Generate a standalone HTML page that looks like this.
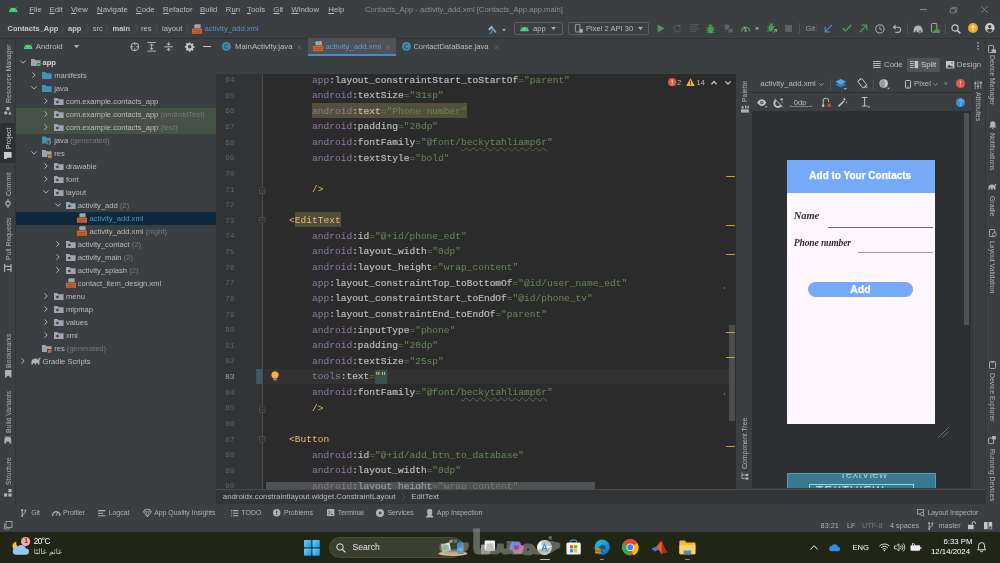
<!DOCTYPE html>
<html lang="en">
<head>
<meta charset="utf-8">
<title>Contacts_App - activity_add.xml</title>
<style>
*{box-sizing:border-box;margin:0;padding:0}
html,body{width:1000px;height:563px;overflow:hidden;background:#3c3f41}
body{position:relative;font-family:"Liberation Sans","DejaVu Sans",sans-serif;font-size:7.4px;color:#bbbbbb;line-height:1}
#root{position:absolute;left:0;top:0;width:1000px;height:563px;overflow:hidden;background:#3c3f41;will-change:transform;filter:blur(0.4px)}
.abs{position:absolute}
.t{position:absolute;white-space:nowrap}
svg{position:absolute;overflow:visible}
/* ---------- menu bar ---------- */
#menubar{left:0;top:0;width:1000px;height:19px;background:#3c3f41}
#menubar .t{top:6.200px;font-size:7.8px;color:#bbbbbb}
#menubar u{text-decoration-thickness:0.5px;text-underline-offset:0.6px}
/* ---------- nav bar ---------- */
#navbar{left:0;top:19px;width:1000px;height:19px;background:#3c3f41}
#navbar .t{top:5.8px;font-size:7.6px}
#navbar b{font-weight:bold;color:#c8c8c8;font-size:7.5px}
#navbar .sep{color:#6e6e6e;font-size:9px;top:3.8px}
.combo{border:0.6px solid #5e6060;border-radius:1.5px;background:#3c3f41}
/* ---------- left stripe ---------- */
.vt{position:absolute;white-space:nowrap;font-size:6.9px;line-height:7.6px;color:#b0b0b0;transform-origin:0 0}
.vl{transform:rotate(-90deg)}
.vr{transform:rotate(90deg)}
/* ---------- project tree ---------- */
#tree{left:15px;top:55.5px;width:201px;height:433px;overflow:hidden}
#tree .r{position:relative;height:13.02px;width:201px}
#tree .r .t{top:3.300px;font-size:7.6px;color:#bbbbbb}
#tree .g{color:#77797a}
#tree .green{background:#475246}
#tree .sel{background:#0d293e}
#tree b{color:#d4d4d4}
.scr{font-family:"Liberation Serif",serif;font-style:italic;font-weight:bold;font-size:9.600px;color:#322e34;letter-spacing:-0.150px}
/* ---------- editor ---------- */
#editor{left:216px;top:73.5px;width:520px;height:415.9px;background:#2b2b2b;overflow:hidden}
#gutter{left:0;top:0;width:46.5px;height:417px;background:#313335}
.ln{position:absolute;left:0;width:18.6px;text-align:right;font-family:"Liberation Mono",monospace;font-size:8.1px;color:#606366}
.cl{position:absolute;left:50.2px;white-space:pre;font-family:"Liberation Mono",monospace;font-size:9.55px;color:#a9b7c6;height:15.625px;line-height:15.625px}
.ln.cur{color:#a4a3a3}
.hl{background:#52503a}
.tgh{background:#4a4a33}
.br{background:#3b514d}
.typo{text-decoration:underline wavy rgba(107,143,90,0.55);text-decoration-thickness:0.5px;text-underline-offset:1.5px}
.ns{color:#917b9f}.at{color:#bdbdbd;-webkit-text-stroke:0.180px #bdbdbd}.v{color:#6a8759}.tg{color:#e8bf6a}
</style>
</head>
<body>
<div id="root">
<div id="menubar" class="abs">
<svg style="left:8.6px;top:7.3px" width="8.6" height="5" viewBox="0 0 17 10"><path d="M0.2 10a8.3 8.3 0 0 1 16.6 0z" fill="#3ddc84"/><path d="M3.2 3.2L1.6 0.6M13.8 3.2l1.6-2.6" stroke="#3ddc84" stroke-width="1" fill="none"/><circle cx="4.8" cy="6.4" r="0.9" fill="#3c3f41"/><circle cx="12.2" cy="6.4" r="0.9" fill="#3c3f41"/></svg>
<span class="t" style="left:29.3px"><u>F</u>ile</span>
<span class="t" style="left:49.5px"><u>E</u>dit</span>
<span class="t" style="left:71px"><u>V</u>iew</span>
<span class="t" style="left:97px"><u>N</u>avigate</span>
<span class="t" style="left:136px"><u>C</u>ode</span>
<span class="t" style="left:163px"><u>R</u>efactor</span>
<span class="t" style="left:200px"><u>B</u>uild</span>
<span class="t" style="left:225.8px">R<u>u</u>n</span>
<span class="t" style="left:247px"><u>T</u>ools</span>
<span class="t" style="left:273.3px"><u>G</u>it</span>
<span class="t" style="left:291.3px"><u>W</u>indow</span>
<span class="t" style="left:328.3px"><u>H</u>elp</span>
<span class="t" id="wtitle" style="left:365px;color:#8c8c8c;font-size:7.68px">Contacts_App - activity_add.xml [Contacts_App.app.main]</span>
<svg style="left:920px;top:9px" width="7" height="1" viewBox="0 0 7 1"><rect width="7" height="0.7" fill="#a8a8a8"/></svg>
<svg style="left:950px;top:6.6px" width="7" height="6.4" viewBox="0 0 7 6.4"><rect x="0.3" y="1.5" width="4.9" height="4.6" rx="0.8" fill="none" stroke="#a8a8a8" stroke-width="0.6"/><path d="M1.7 1.3V1a0.7 0.7 0 0 1 .7-.7H6a.7.7 0 0 1 .7.7v3.6a.7.7 0 0 1-.7.7h-.6" fill="none" stroke="#a8a8a8" stroke-width="0.6"/></svg>
<svg style="left:980.6px;top:6px" width="7" height="7" viewBox="0 0 7 7"><path d="M0.3 0.3L6.7 6.7M6.7 0.3L0.3 6.7" stroke="#a8a8a8" stroke-width="0.6" fill="none"/></svg>
</div>
<div id="navbar" class="abs">
<span class="t" style="left:7.5px"><b>Contacts_App</b></span>
<svg style="left:60.5px;top:5px" width="3" height="9" viewBox="0 0 3 9"><path d="M0.4 0.4L2.6 4.5L0.4 8.6" fill="none" stroke="#585b5d" stroke-width="0.6"/></svg>
<span class="t" style="left:68px"><b>app</b></span>
<svg style="left:85.5px;top:5px" width="3" height="9" viewBox="0 0 3 9"><path d="M0.4 0.4L2.6 4.5L0.4 8.6" fill="none" stroke="#585b5d" stroke-width="0.6"/></svg>
<span class="t" style="left:92.7px">src</span>
<svg style="left:105.0px;top:5px" width="3" height="9" viewBox="0 0 3 9"><path d="M0.4 0.4L2.6 4.5L0.4 8.6" fill="none" stroke="#585b5d" stroke-width="0.6"/></svg>
<span class="t" style="left:112.5px"><b>main</b></span>
<svg style="left:134.5px;top:5px" width="3" height="9" viewBox="0 0 3 9"><path d="M0.4 0.4L2.6 4.5L0.4 8.6" fill="none" stroke="#585b5d" stroke-width="0.6"/></svg>
<span class="t" style="left:141px">res</span>
<svg style="left:155.0px;top:5px" width="3" height="9" viewBox="0 0 3 9"><path d="M0.4 0.4L2.6 4.5L0.4 8.6" fill="none" stroke="#585b5d" stroke-width="0.6"/></svg>
<span class="t" style="left:162px">layout</span>
<svg style="left:186.0px;top:5px" width="3" height="9" viewBox="0 0 3 9"><path d="M0.4 0.4L2.6 4.5L0.4 8.6" fill="none" stroke="#585b5d" stroke-width="0.6"/></svg>
<svg class="xmlico" style="left:192px;top:4.6px" width="10" height="10" viewBox="0 0 10 10"><rect x="0" y="4.6" width="10" height="5.2" fill="#d9602c"/><path d="M3.6 0.2h5v4H2.4V1.4z" fill="#9aa7b0"/><path d="M3.4 0.2v1.4H2z" fill="#c9d2d8"/><rect x="1.2" y="6.2" width="7.6" height="0.7" fill="#3c3f41" opacity=".55"/><rect x="1.2" y="7.8" width="7.6" height="0.7" fill="#3c3f41" opacity=".55"/></svg>
<span class="t" style="left:204.5px;color:#4f8fcf">activity_add.xml</span>
<!-- run toolbar -->
<svg style="left:487px;top:4.5px" width="20" height="11" viewBox="0 0 20 11"><path d="M1.2 5.2L4.6 1.6L6 3L2.6 6.6z" fill="#afb1b3"/><path d="M4.4 4.2l1-1L9.6 8l-1 1z" fill="#afb1b3"/><path d="M4.6 7.2L7 4.8" stroke="#3592c4" stroke-width="1.4"/><path d="M2.6 10L5.4 7.4" stroke="#3592c4" stroke-width="1.6"/><path d="M15 5l2 2.2L19 5z" fill="#afb1b3"/></svg>
<div class="abs combo" style="left:513.7px;top:3px;width:49px;height:12.6px"></div>
<svg style="left:520px;top:6.8px" width="9" height="5.2" viewBox="0 0 17 10"><path d="M0.2 10a8.3 8.3 0 0 1 16.6 0z" fill="#3ddc84"/><path d="M3.2 3.2L1.6 0.6M13.8 3.2l1.6-2.6" stroke="#3ddc84" stroke-width="1" fill="none"/><circle cx="4.8" cy="6.4" r="0.9" fill="#3c3f41"/><circle cx="12.2" cy="6.4" r="0.9" fill="#3c3f41"/></svg>
<span class="t" style="left:533px">app</span>
<svg style="left:551px;top:8px" width="5" height="3" viewBox="0 0 5 3"><path d="M0 0h5L2.5 3z" fill="#afb1b3"/></svg>
<div class="abs combo" style="left:567.5px;top:3px;width:81.4px;height:12.6px"></div>
<svg style="left:575px;top:5px" width="8" height="9" viewBox="0 0 8 9"><rect x="0.4" y="0.4" width="4.6" height="7.6" rx="0.7" fill="none" stroke="#afb1b3" stroke-width="0.8"/><rect x="4.6" y="5" width="3.2" height="3.6" fill="#afb1b3"/></svg>
<span class="t" style="left:586px">Pixel 2 API 30</span>
<svg style="left:637.5px;top:8px" width="5" height="3" viewBox="0 0 5 3"><path d="M0 0h5L2.5 3z" fill="#afb1b3"/></svg>
<svg style="left:657px;top:5px" width="8" height="9" viewBox="0 0 8 9"><path d="M0.6 0.4L7.6 4.5L0.6 8.6z" fill="#499c54"/></svg>
<svg style="left:672.5px;top:5px" width="9" height="9" viewBox="0 0 9 9"><path d="M7.4 4.6a3.2 3.2 0 1 1-1.4-2.7" fill="none" stroke="#5e6163" stroke-width="1"/><path d="M5 0.4L8 1.6L5.6 3.6z" fill="#5e6163"/></svg>
<svg style="left:689.5px;top:5.4px" width="10" height="8" viewBox="0 0 10 8"><path d="M0 0.6h9M0 2.8h7M0 5h9M0 7.2h6" stroke="#5e6163" stroke-width="0.9"/></svg>
<svg style="left:706px;top:4.6px" width="9" height="10" viewBox="0 0 9 10"><rect x="2" y="2.6" width="5" height="6.6" rx="1.6" fill="#499c54"/><path d="M2.6 2.4a1.9 1.9 0 0 1 3.8 0z" fill="#499c54"/><path d="M0.2 3.4l2 1M0 6h2M0.2 8.8l2-1M8.8 3.4l-2 1M9 6H7M8.8 8.8l-2-1M3 0.4l.8 1M6 0.4l-.8 1" stroke="#499c54" stroke-width="0.8"/></svg>
<svg style="left:723.5px;top:5px" width="9.4" height="9" viewBox="0 0 9.4 9"><path d="M0.6 1.2L3 0.2l2.4 1v3.4L3 6.2 0.6 4.6z" fill="#5e6163"/><path d="M4.2 4.4h5v4.4h-5z" fill="#5e6163" stroke="#3c3f41" stroke-width="0.6"/></svg>
<svg style="left:741px;top:5px" width="19" height="9" viewBox="0 0 19 9"><path d="M0.8 7.4a4 4 0 0 1 8 0" fill="none" stroke="#499c54" stroke-width="1.5"/><path d="M3.2 7.6a1.7 1.7 0 0 1 3.2 0z" fill="#afb1b3"/><path d="M4.8 6.6L3 2.6" stroke="#afb1b3" stroke-width="1"/><path d="M14 3.6l2.1 2.4L18.2 3.6z" fill="#afb1b3"/></svg>
<svg style="left:767px;top:4.4px" width="10.4" height="10.4" viewBox="0 0 10.4 10.4"><rect x="1.8" y="2.6" width="5" height="6" rx="1.5" fill="#499c54"/><path d="M2.4 2.4a1.9 1.9 0 0 1 3.8 0z" fill="#499c54"/><path d="M0.2 3.4l2 1M0 6h2M0.2 8.6l2-1M8.4 3.4l-2 1M2.8 0.4l.8 1M5.8 0.4l-.8 1" stroke="#499c54" stroke-width="0.8"/><path d="M5.6 6.2h4.4v3.9H5.6z" fill="#3c3f41"/><path d="M6.6 9.6L9.6 6.6M7.4 6.6h2.2v2.2" fill="none" stroke="#afb1b3" stroke-width="0.9"/></svg>
<div class="abs" style="left:785px;top:5.8px;width:7.2px;height:7.2px;background:#5e6163"></div>
<div class="abs" style="left:798.6px;top:4px;width:0.6px;height:11px;background:#515456"></div>
<span class="t" style="left:805.4px;color:#9a9a9a">Git:</span>
<svg style="left:824px;top:5px" width="9" height="9" viewBox="0 0 9 9"><path d="M8 1L1.6 7.4M1.2 2.8v5h5" fill="none" stroke="#3592c4" stroke-width="1.2"/></svg>
<svg style="left:841.6px;top:5.4px" width="10" height="8" viewBox="0 0 10 8"><path d="M0.8 4.2L3.6 7L9.2 0.8" fill="none" stroke="#499c54" stroke-width="1.3"/></svg>
<svg style="left:858.6px;top:5px" width="9" height="9" viewBox="0 0 9 9"><path d="M1 8L7.4 1.6M2.8 1.2h5v5" fill="none" stroke="#499c54" stroke-width="1.2"/></svg>
<svg style="left:874.8px;top:4.6px" width="9.8" height="9.8" viewBox="0 0 9.8 9.8"><circle cx="4.9" cy="4.9" r="4.1" fill="none" stroke="#afb1b3" stroke-width="1"/><path d="M4.9 2.4v2.8l2 1" fill="none" stroke="#afb1b3" stroke-width="0.9"/></svg>
<svg style="left:892px;top:5px" width="9.6" height="9" viewBox="0 0 9.6 9"><path d="M2.4 3.2h3.6a2.6 2.6 0 0 1 0 5.2H3.4" fill="none" stroke="#afb1b3" stroke-width="1.1"/><path d="M3.6 0.6L0.6 3.2l3 2.6z" fill="#afb1b3"/></svg>
<div class="abs" style="left:906.6px;top:4px;width:0.6px;height:11px;background:#515456"></div>
<svg style="left:913px;top:4.6px" width="10.4" height="10" viewBox="0 0 10.4 10"><path d="M0.6 6.6c0-3 2-5 4.6-5 2.4 0 3.8 1.4 4.2 3.4l.4 3.2H7.6V6.6H6V8.2H3.6V6.6H2.4v1.6H.6z" fill="#afb1b3"/><path d="M6.6 9.4V6.4M5.2 7.8l1.4 1.8L8 7.8" fill="none" stroke="#3592c4" stroke-width="1"/></svg>
<svg style="left:930.6px;top:4.4px" width="9" height="10.4" viewBox="0 0 9 10.4"><rect x="0.5" y="0.5" width="5.4" height="8.6" rx="0.8" fill="none" stroke="#afb1b3" stroke-width="0.9"/><rect x="3.4" y="6.6" width="5.4" height="3.4" rx="0.6" fill="#499c54"/></svg>
<div class="abs" style="left:944.6px;top:4px;width:0.6px;height:11px;background:#515456"></div>
<svg style="left:951px;top:4.6px" width="10" height="10" viewBox="0 0 10 10"><circle cx="4" cy="4" r="3.1" fill="none" stroke="#c7c9cb" stroke-width="1.2"/><path d="M6.2 6.2L9.4 9.4" stroke="#c7c9cb" stroke-width="1.5"/></svg>
<svg style="left:968.4px;top:4.2px" width="10" height="10" viewBox="0 0 10 10"><circle cx="5" cy="5" r="5" fill="#f0a732"/><path d="M5 7.8V3M3 4.8l2-2.2 2 2.2" fill="none" stroke="#fff" stroke-width="1"/></svg>
<svg style="left:985px;top:4.4px" width="9.6" height="9.6" viewBox="0 0 9.6 9.6"><circle cx="4.8" cy="4.8" r="4.8" fill="#c7c9cb"/><circle cx="4.8" cy="3.6" r="1.6" fill="#3c3f41"/><path d="M1.8 7.8a3.2 3.2 0 0 1 6 0a4.4 4.4 0 0 1-6 0z" fill="#3c3f41"/></svg>
</div>
<!-- ===== project header + tabs row (y 38-56) ===== -->
<div id="tabsrow" class="abs" style="left:0;top:37.6px;width:1000px;height:18.4px">
<div class="abs" style="left:0;top:0;width:1000px;height:0.6px;background:#323232"></div>
<svg style="left:23.6px;top:6.4px" width="8.4" height="5" viewBox="0 0 17 10"><path d="M0.2 10a8.3 8.3 0 0 1 16.6 0z" fill="#3ddc84"/><path d="M3.2 3.2L1.6 0.6M13.8 3.2l1.6-2.6" stroke="#3ddc84" stroke-width="1" fill="none"/><circle cx="4.8" cy="6.4" r="0.9" fill="#3c3f41"/><circle cx="12.2" cy="6.4" r="0.9" fill="#3c3f41"/></svg>
<span class="t" style="left:35.7px;top:5.2px;font-size:7.8px">Android</span>
<svg style="left:73.6px;top:7.6px" width="5.2" height="3.2" viewBox="0 0 5 3"><path d="M0 0h5L2.5 3z" fill="#afb1b3"/></svg>
<svg style="left:130px;top:4.2px" width="9.6" height="9.6" viewBox="0 0 9.6 9.6"><circle cx="4.8" cy="4.8" r="3.9" fill="none" stroke="#c3c5c7" stroke-width="0.9"/><path d="M4.8 0.6v2.6M4.8 6.4V9M0.6 4.8h2.6M6.4 4.8H9" stroke="#c3c5c7" stroke-width="0.9"/></svg>
<svg style="left:147px;top:4.2px" width="9.2" height="9.6" viewBox="0 0 9.2 9.6"><path d="M0.4 0.5h8.4M0.4 9.1h8.4" stroke="#c3c5c7" stroke-width="0.9"/><path d="M4.6 2v5.6M2.8 3.8l1.8-1.9 1.8 1.9M2.8 5.8l1.8 1.9 1.8-1.9" fill="none" stroke="#c3c5c7" stroke-width="0.9"/></svg>
<svg style="left:164.4px;top:4.2px" width="9.2" height="9.6" viewBox="0 0 9.2 9.6"><path d="M0.4 4.8h8.4" stroke="#c3c5c7" stroke-width="0.9"/><path d="M4.6 0.2v3M2.8 1.4l1.8 1.9 1.8-1.9M4.6 9.4v-3M2.8 8.2l1.8-1.9 1.8 1.9" fill="none" stroke="#c3c5c7" stroke-width="0.9"/></svg>
<svg style="left:185.4px;top:4.3px" width="9.4" height="9.4" viewBox="0 0 20 20"><path d="M10 6.3a3.7 3.7 0 1 0 0 7.4 3.7 3.7 0 0 0 0-7.4zM8.4 0.8h3.2l.5 2.5 1.7.7 2.1-1.4 2.3 2.3-1.4 2.1.7 1.7 2.5.5v3.2l-2.5.5-.7 1.7 1.4 2.1-2.3 2.3-2.1-1.4-1.7.7-.5 2.5H8.4l-.5-2.5-1.7-.7-2.1 1.4-2.3-2.3 1.4-2.1-.7-1.7L0 11.600V8.400l2.500-.5.7-1.700L1.800 4.100l2.300-2.300 2.100 1.400 1.700-.7z" fill="#c3c5c7" fill-rule="evenodd"/></svg>
<div class="abs" style="left:203px;top:8.6px;width:8.2px;height:1px;background:#c3c5c7"></div>
<!-- tabs -->
<div class="abs" style="left:307.5px;top:0;width:88.5px;height:18.4px;background:#4e5254"></div>
<div class="abs" style="left:307.5px;top:16.2px;width:88.5px;height:2.2px;background:#4a88c7"></div>
<svg class="jico" style="left:222.4px;top:4.6px" width="8.8" height="8.8" viewBox="0 0 10 10"><circle cx="5" cy="5" r="5" fill="#3a8fb7"/><path d="M6.9 6.6a2.3 2.3 0 1 1 0-3.200" fill="none" stroke="#2b2b2b" stroke-opacity=".7" stroke-width="1.100"/></svg>
<span class="t" style="left:235px;top:5.4px;font-size:7.8px">MainActivity.java</span>
<svg style="left:297px;top:7px" width="4.6" height="4.6" viewBox="0 0 5 5"><path d="M0.3 0.3L4.700 4.700M4.700 0.300L0.300 4.700" stroke="#6e7072" stroke-width="0.700"/></svg>
<svg class="xmlico" style="left:313px;top:3.800px" width="10.4" height="10.4" viewBox="0 0 10 10"><rect x="0" y="4.600" width="10" height="5.200" fill="#d9602c"/><path d="M3.600 0.200h5v4H2.400V1.400z" fill="#9aa7b0"/><path d="M3.400 0.200v1.400H2z" fill="#c9d2d8"/><rect x="1.200" y="6.200" width="7.600" height="0.700" fill="#3c3f41" opacity=".55"/><rect x="1.200" y="7.800" width="7.600" height="0.700" fill="#3c3f41" opacity=".55"/></svg>
<span class="t" style="left:325.5px;top:5.4px;font-size:7.8px;color:#5a9ad8">activity_add.xml</span>
<svg style="left:385.600px;top:7px" width="4.600" height="4.600" viewBox="0 0 5 5"><path d="M0.300 0.300L4.700 4.700M4.700 0.300L0.300 4.700" stroke="#7e8082" stroke-width="0.700"/></svg>
<svg class="jico" style="left:401.800px;top:4.600px" width="8.800" height="8.800" viewBox="0 0 10 10"><circle cx="5" cy="5" r="5" fill="#3a8fb7"/><path d="M6.900 6.600a2.300 2.300 0 1 1 0-3.200" fill="none" stroke="#2b2b2b" stroke-opacity=".7" stroke-width="1.100"/></svg>
<span class="t" style="left:413.400px;top:5.500px;font-size:7.560px">ContactDataBase.java</span>
<svg style="left:493.600px;top:7px" width="4.600" height="4.600" viewBox="0 0 5 5"><path d="M0.300 0.300L4.700 4.700M4.700 0.300L0.300 4.700" stroke="#6e7072" stroke-width="0.700"/></svg>
<svg style="left:977px;top:4.600px" width="2" height="8" viewBox="0 0 2 8"><circle cx="1" cy="1" r="0.800" fill="#c3c5c7"/><circle cx="1" cy="4" r="0.800" fill="#c3c5c7"/><circle cx="1" cy="7" r="0.800" fill="#c3c5c7"/></svg>
</div>
<!-- ===== Code / Split / Design row (y 56-72) ===== -->
<div id="modes" class="abs" style="left:215px;top:56px;width:770px;height:16px">
<svg style="left:658px;top:5.400px" width="7.800" height="7" viewBox="0 0 7.800 7"><path d="M0 0.500h7.800M0 2.500h7.800M0 4.500h7.800M0 6.500h7.800" stroke="#c3c5c7" stroke-width="0.900"/></svg>
<span class="t" style="left:669px;top:4.800px;font-size:7.800px">Code</span>
<div class="abs" style="left:692px;top:1.800px;width:33px;height:14px;background:#505457;border-radius:2px"></div>
<svg style="left:695.400px;top:5.200px" width="8.200" height="7.400" viewBox="0 0 8.200 7.400"><path d="M0 0.500h3.600M0 2.500h3.600M0 4.500h3.600M0 6.500h3.600" stroke="#c3c5c7" stroke-width="0.900"/><rect x="4.600" y="0" width="3.600" height="7.200" fill="#c3c5c7"/></svg>
<span class="t" style="left:706px;top:4.800px;font-size:7.800px;color:#d0d0d0">Split</span>
<svg style="left:731px;top:5px" width="8.400" height="7.600" viewBox="0 0 8.400 7.600"><rect x="0" y="0" width="8.400" height="7.600" rx="0.800" fill="#c3c5c7"/><path d="M1 6.400l2.200-2.800 1.600 1.800 1-1 1.600 2z" fill="#3c3f41"/><circle cx="6" cy="2" r="0.800" fill="#3c3f41"/></svg>
<span class="t" style="left:741.800px;top:4.800px;font-size:7.800px">Design</span>
</div>
<div id="tree" class="abs">
<div class="r "><svg style="left:4.5px;top:4.4px" width="6" height="4" viewBox="0 0 6 4"><path d="M0.4 0.4L3 3.2L5.6 0.4" fill="none" stroke="#adafb1" stroke-width="1"/></svg><svg style="left:15.5px;top:2px" width="9.6" height="9" viewBox="0 0 9.6 9"><path d="M0 1h3.4l1 1.200H9.600V8H0z" fill="#9aa7b0"/><circle cx="7.600" cy="7" r="1.900" fill="#3c3f41"/><circle cx="7.600" cy="7" r="1.300" fill="#3ddc84"/></svg><span class="t" style="left:27.5px"><b>app</b></span></div>
<div class="r "><svg style="left:17.3px;top:3.4px" width="4" height="6" viewBox="0 0 4 6"><path d="M0.4 0.4L3.2 3L0.4 5.6" fill="none" stroke="#adafb1" stroke-width="1"/></svg><svg style="left:27.2px;top:2px" width="9.6" height="9" viewBox="0 0 9.6 9"><path d="M0 1h3.400l1 1.200H9.600V8H0z" fill="#3e93bd"/></svg><span class="t" style="left:39.2px">manifests</span></div>
<div class="r "><svg style="left:16.2px;top:4.4px" width="6" height="4" viewBox="0 0 6 4"><path d="M0.4 0.4L3 3.2L5.6 0.4" fill="none" stroke="#adafb1" stroke-width="1"/></svg><svg style="left:27.2px;top:2px" width="9.6" height="9" viewBox="0 0 9.6 9"><path d="M0 1h3.400l1 1.200H9.600V8H0z" fill="#3e93bd"/></svg><span class="t" style="left:39.2px">java</span></div>
<div class="r "><svg style="left:29.0px;top:3.4px" width="4" height="6" viewBox="0 0 4 6"><path d="M0.4 0.4L3.2 3L0.4 5.6" fill="none" stroke="#adafb1" stroke-width="1"/></svg><svg style="left:38.9px;top:2px" width="9.6" height="9" viewBox="0 0 9.6 9"><path d="M0 1h3.400l1 1.200H9.600V8H0z" fill="#9aa7b0"/><circle cx="3.400" cy="5" r="1.300" fill="#3c3f41"/></svg><span class="t" style="left:50.9px">com.example.contacts_app</span></div>
<div class="r green"><svg style="left:29.0px;top:3.4px" width="4" height="6" viewBox="0 0 4 6"><path d="M0.4 0.4L3.2 3L0.4 5.6" fill="none" stroke="#adafb1" stroke-width="1"/></svg><svg style="left:38.9px;top:2px" width="9.6" height="9" viewBox="0 0 9.6 9"><path d="M0 1h3.400l1 1.200H9.600V8H0z" fill="#9aa7b0"/><circle cx="3.400" cy="5" r="1.300" fill="#3c3f41"/></svg><span class="t" style="left:50.9px">com.example.contacts_app <span class="g">(androidTest)</span></span></div>
<div class="r green"><svg style="left:29.0px;top:3.4px" width="4" height="6" viewBox="0 0 4 6"><path d="M0.4 0.4L3.2 3L0.4 5.6" fill="none" stroke="#adafb1" stroke-width="1"/></svg><svg style="left:38.9px;top:2px" width="9.6" height="9" viewBox="0 0 9.6 9"><path d="M0 1h3.400l1 1.200H9.600V8H0z" fill="#9aa7b0"/><circle cx="3.400" cy="5" r="1.300" fill="#3c3f41"/></svg><span class="t" style="left:50.9px">com.example.contacts_app <span class="g">(test)</span></span></div>
<div class="r "><svg style="left:27.2px;top:2px" width="9.6" height="9" viewBox="0 0 9.6 9"><path d="M0 0.600h3.400l1 1.200H8.600V7.400H0z" fill="#3e93bd"/><circle cx="6.800" cy="6.400" r="2.500" fill="#3c3f41"/><circle cx="6.800" cy="6.400" r="1.700" fill="none" stroke="#afb1b3" stroke-width="1.100" stroke-dasharray="0.900 0.600"/></svg><span class="t" style="left:39.2px">java <span class="g">(generated)</span></span></div>
<div class="r "><svg style="left:16.2px;top:4.4px" width="6" height="4" viewBox="0 0 6 4"><path d="M0.4 0.4L3 3.2L5.6 0.4" fill="none" stroke="#adafb1" stroke-width="1"/></svg><svg style="left:27.2px;top:2px" width="9.6" height="9" viewBox="0 0 9.6 9"><path d="M0 1h3.400l1 1.200H9.600V8H0z" fill="#9aa7b0"/><rect x="5.400" y="5.400" width="4.200" height="3.600" fill="#3c3f41"/><path d="M6 6.200h3.600M6 7.400h3.600M6 8.600h3.600" stroke="#e8a33d" stroke-width="0.800"/></svg><span class="t" style="left:39.2px">res</span></div>
<div class="r "><svg style="left:29.0px;top:3.4px" width="4" height="6" viewBox="0 0 4 6"><path d="M0.4 0.4L3.2 3L0.4 5.6" fill="none" stroke="#adafb1" stroke-width="1"/></svg><svg style="left:38.9px;top:2px" width="9.6" height="9" viewBox="0 0 9.6 9"><path d="M0 1h3.400l1 1.200H9.600V8H0z" fill="#9aa7b0"/><circle cx="3.400" cy="5" r="1.300" fill="#3c3f41"/></svg><span class="t" style="left:50.9px">drawable</span></div>
<div class="r "><svg style="left:29.0px;top:3.4px" width="4" height="6" viewBox="0 0 4 6"><path d="M0.4 0.4L3.2 3L0.4 5.6" fill="none" stroke="#adafb1" stroke-width="1"/></svg><svg style="left:38.9px;top:2px" width="9.6" height="9" viewBox="0 0 9.6 9"><path d="M0 1h3.400l1 1.200H9.600V8H0z" fill="#9aa7b0"/><circle cx="3.400" cy="5" r="1.300" fill="#3c3f41"/></svg><span class="t" style="left:50.9px">font</span></div>
<div class="r "><svg style="left:27.9px;top:4.4px" width="6" height="4" viewBox="0 0 6 4"><path d="M0.4 0.4L3 3.2L5.6 0.4" fill="none" stroke="#adafb1" stroke-width="1"/></svg><svg style="left:38.9px;top:2px" width="9.6" height="9" viewBox="0 0 9.6 9"><path d="M0 1h3.400l1 1.200H9.600V8H0z" fill="#9aa7b0"/><circle cx="3.400" cy="5" r="1.300" fill="#3c3f41"/></svg><span class="t" style="left:50.9px">layout</span></div>
<div class="r "><svg style="left:39.7px;top:4.4px" width="6" height="4" viewBox="0 0 6 4"><path d="M0.4 0.4L3 3.2L5.6 0.4" fill="none" stroke="#adafb1" stroke-width="1"/></svg><svg style="left:50.7px;top:2px" width="9.6" height="9" viewBox="0 0 9.6 9"><path d="M0 1h3.400l1 1.200H9.600V8H0z" fill="#9aa7b0"/><circle cx="3.400" cy="5" r="1.300" fill="#3c3f41"/></svg><span class="t" style="left:62.7px">activity_add <span class="g">(2)</span></span></div>
<div class="r sel"><svg style="left:62.4px;top:1.400px" width="10" height="10" viewBox="0 0 10 10"><rect x="0" y="4.600" width="10" height="5.200" fill="#d9602c"/><path d="M3.600 0.200h5v4H2.400V1.400z" fill="#9aa7b0"/><path d="M3.400 0.200v1.400H2z" fill="#c9d2d8"/><rect x="1.200" y="6.200" width="7.600" height="0.700" fill="#3c3f41" opacity=".55"/><rect x="1.200" y="7.800" width="7.600" height="0.700" fill="#3c3f41" opacity=".55"/></svg><span class="t" style="left:74.4px;color:#4d8dcc">activity_add.xml</span></div>
<div class="r "><svg style="left:62.4px;top:1.400px" width="10" height="10" viewBox="0 0 10 10"><rect x="0" y="4.600" width="10" height="5.200" fill="#d9602c"/><path d="M3.600 0.200h5v4H2.400V1.400z" fill="#9aa7b0"/><path d="M3.400 0.200v1.400H2z" fill="#c9d2d8"/><rect x="1.200" y="6.200" width="7.600" height="0.700" fill="#3c3f41" opacity=".55"/><rect x="1.200" y="7.800" width="7.600" height="0.700" fill="#3c3f41" opacity=".55"/></svg><span class="t" style="left:74.4px">activity_add.xml <span class="g">(night)</span></span></div>
<div class="r "><svg style="left:40.8px;top:3.4px" width="4" height="6" viewBox="0 0 4 6"><path d="M0.4 0.4L3.2 3L0.4 5.6" fill="none" stroke="#adafb1" stroke-width="1"/></svg><svg style="left:50.7px;top:2px" width="9.6" height="9" viewBox="0 0 9.6 9"><path d="M0 1h3.400l1 1.200H9.600V8H0z" fill="#9aa7b0"/><circle cx="3.400" cy="5" r="1.300" fill="#3c3f41"/></svg><span class="t" style="left:62.7px">activity_contact <span class="g">(2)</span></span></div>
<div class="r "><svg style="left:40.8px;top:3.4px" width="4" height="6" viewBox="0 0 4 6"><path d="M0.4 0.4L3.2 3L0.4 5.6" fill="none" stroke="#adafb1" stroke-width="1"/></svg><svg style="left:50.7px;top:2px" width="9.6" height="9" viewBox="0 0 9.6 9"><path d="M0 1h3.400l1 1.200H9.600V8H0z" fill="#9aa7b0"/><circle cx="3.400" cy="5" r="1.300" fill="#3c3f41"/></svg><span class="t" style="left:62.7px">activity_main <span class="g">(2)</span></span></div>
<div class="r "><svg style="left:40.8px;top:3.4px" width="4" height="6" viewBox="0 0 4 6"><path d="M0.4 0.4L3.2 3L0.4 5.6" fill="none" stroke="#adafb1" stroke-width="1"/></svg><svg style="left:50.7px;top:2px" width="9.6" height="9" viewBox="0 0 9.6 9"><path d="M0 1h3.400l1 1.200H9.600V8H0z" fill="#9aa7b0"/><circle cx="3.400" cy="5" r="1.300" fill="#3c3f41"/></svg><span class="t" style="left:62.7px">activity_splash <span class="g">(2)</span></span></div>
<div class="r "><svg style="left:50.7px;top:1.400px" width="10" height="10" viewBox="0 0 10 10"><rect x="0" y="4.600" width="10" height="5.200" fill="#d9602c"/><path d="M3.600 0.200h5v4H2.400V1.400z" fill="#9aa7b0"/><path d="M3.400 0.200v1.400H2z" fill="#c9d2d8"/><rect x="1.200" y="6.200" width="7.600" height="0.700" fill="#3c3f41" opacity=".55"/><rect x="1.200" y="7.800" width="7.600" height="0.700" fill="#3c3f41" opacity=".55"/></svg><span class="t" style="left:62.7px">contact_item_design.xml</span></div>
<div class="r "><svg style="left:29.0px;top:3.4px" width="4" height="6" viewBox="0 0 4 6"><path d="M0.4 0.4L3.2 3L0.4 5.6" fill="none" stroke="#adafb1" stroke-width="1"/></svg><svg style="left:38.9px;top:2px" width="9.6" height="9" viewBox="0 0 9.6 9"><path d="M0 1h3.400l1 1.200H9.600V8H0z" fill="#9aa7b0"/><circle cx="3.400" cy="5" r="1.300" fill="#3c3f41"/></svg><span class="t" style="left:50.9px">menu</span></div>
<div class="r "><svg style="left:29.0px;top:3.4px" width="4" height="6" viewBox="0 0 4 6"><path d="M0.4 0.4L3.2 3L0.4 5.6" fill="none" stroke="#adafb1" stroke-width="1"/></svg><svg style="left:38.9px;top:2px" width="9.6" height="9" viewBox="0 0 9.6 9"><path d="M0 1h3.400l1 1.200H9.600V8H0z" fill="#9aa7b0"/><circle cx="3.400" cy="5" r="1.300" fill="#3c3f41"/></svg><span class="t" style="left:50.9px">mipmap</span></div>
<div class="r "><svg style="left:29.0px;top:3.4px" width="4" height="6" viewBox="0 0 4 6"><path d="M0.4 0.4L3.2 3L0.4 5.6" fill="none" stroke="#adafb1" stroke-width="1"/></svg><svg style="left:38.9px;top:2px" width="9.6" height="9" viewBox="0 0 9.6 9"><path d="M0 1h3.400l1 1.200H9.600V8H0z" fill="#9aa7b0"/><circle cx="3.400" cy="5" r="1.300" fill="#3c3f41"/></svg><span class="t" style="left:50.9px">values</span></div>
<div class="r "><svg style="left:29.0px;top:3.4px" width="4" height="6" viewBox="0 0 4 6"><path d="M0.4 0.4L3.2 3L0.4 5.6" fill="none" stroke="#adafb1" stroke-width="1"/></svg><svg style="left:38.9px;top:2px" width="9.6" height="9" viewBox="0 0 9.6 9"><path d="M0 1h3.400l1 1.200H9.600V8H0z" fill="#9aa7b0"/><circle cx="3.400" cy="5" r="1.300" fill="#3c3f41"/></svg><span class="t" style="left:50.9px">xml</span></div>
<div class="r "><svg style="left:27.2px;top:2px" width="9.6" height="9" viewBox="0 0 9.6 9"><path d="M0 1h3.400l1 1.200H9.600V8H0z" fill="#9aa7b0"/><rect x="5" y="5" width="4.600" height="4" fill="#3c3f41"/><rect x="5.800" y="5.800" width="3.400" height="3" fill="#d9602c"/></svg><span class="t" style="left:39.2px">res <span class="g">(generated)</span></span></div>
<div class="r "><svg style="left:5.6px;top:3.4px" width="4" height="6" viewBox="0 0 4 6"><path d="M0.4 0.4L3.2 3L0.4 5.6" fill="none" stroke="#adafb1" stroke-width="1"/></svg><svg style="left:15.5px;top:2.400px" width="10" height="8" viewBox="0 0 10 8"><path d="M0.400 7.600V5.200C0.400 3 2 1.600 4.200 1.600c1.400 0 2.200.6 2.800 1.400.4-1.400 1.200-2.200 2.200-2.200.6 0 .8.600.2 1-.8.600-1 1.400-1 2.400v3.400H6.800V6H5.200v1.600H3.600V6H2v1.600z" fill="#afb1b3"/></svg><span class="t" style="left:27.5px">Gradle Scripts</span></div>
</div>
<!-- ===== left stripe ===== -->
<div class="abs" style="left:0;top:123px;width:15px;height:40px;background:#2d2f30"></div>
<div class="abs" style="left:15px;top:38px;width:0.6px;height:466px;background:#323435"></div>
<span class="vt vl" style="left:4.6px;top:103.0px;color:#b0b0b0">Resource Manager</span>
<svg style="left:4px;top:107px" width="7.600" height="7.600" viewBox="0 0 7.600 7.600"><rect x="2.200" y="0" width="3.200" height="3.200" fill="#afb1b3"/><circle cx="1.700" cy="5.900" r="1.700" fill="#afb1b3"/><path d="M4.200 7.600L5.900 4.200L7.600 7.600z" fill="#afb1b3"/></svg>
<span class="vt vl" style="left:4.6px;top:149.0px;color:#d8d8d8">Project</span>
<svg style="left:4px;top:151.600px" width="7.600" height="7" viewBox="0 0 7.600 7"><path d="M0 0h7.600v5.800H3.400L2.400 7H0z" fill="#c8cacc"/></svg>
<span class="vt vl" style="left:4.6px;top:196.0px;color:#b0b0b0">Commit</span>
<svg style="left:3.800px;top:198.600px" width="8" height="9" viewBox="0 0 8 9"><circle cx="4" cy="4.500" r="2.100" fill="none" stroke="#afb1b3" stroke-width="1.100"/><path d="M4 0v2.400M4 6.600V9" stroke="#afb1b3" stroke-width="1.100"/></svg>
<span class="vt vl" style="left:4.6px;top:260.0px;color:#b0b0b0">Pull Requests</span>
<svg style="left:4px;top:264px" width="7.600" height="8" viewBox="0 0 7.600 8"><path d="M0.600 0v8M0.600 2.400h6.400M7 0v8M3 5.600h4" fill="none" stroke="#afb1b3" stroke-width="1.200"/></svg>
<span class="vt vl" style="left:4.6px;top:368.0px;color:#b0b0b0">Bookmarks</span>
<svg style="left:4.600px;top:370.400px" width="6.400" height="8" viewBox="0 0 6.400 8"><path d="M0 0h6.400v8L3.200 5.600L0 8z" fill="#afb1b3"/></svg>
<span class="vt vl" style="left:4.6px;top:433.4px;color:#b0b0b0">Build Variants</span>
<svg style="left:4px;top:436px" width="7.600" height="7.600" viewBox="0 0 7.600 7.600"><path d="M0.400 7.600V3.800a3.400 3.400 0 0 1 6.800 0v3.800H5.400V5.600H2.200v2z" fill="#afb1b3"/><path d="M1.400 1.200L0.400 0M6.200 1.200l1-1.200" stroke="#afb1b3" stroke-width="0.700"/></svg>
<span class="vt vl" style="left:4.6px;top:485.0px;color:#b0b0b0">Structure</span>
<svg style="left:4px;top:488.600px" width="7.600" height="7.600" viewBox="0 0 7.600 7.600"><rect x="4.400" y="0" width="3.200" height="3.200" fill="#afb1b3"/><rect x="0" y="4.400" width="3.200" height="3.200" fill="#afb1b3"/><rect x="4.400" y="4.400" width="3.200" height="3.200" fill="#afb1b3"/></svg>
<!-- ===== right stripe ===== -->
<div class="abs" style="left:985px;top:38px;width:0.6px;height:466px;background:#323435"></div>
<svg style="left:988.400px;top:45px" width="8" height="8" viewBox="0 0 8 8"><rect x="0.500" y="0.500" width="5" height="7" rx="0.600" fill="none" stroke="#afb1b3" stroke-width="0.900"/><rect x="3.600" y="4.400" width="4.400" height="3.600" fill="#afb1b3"/></svg>
<span class="vt vr" style="left:996.2px;top:54.5px;color:#b0b0b0">Device Manager</span>
<svg style="left:988.600px;top:121px" width="7.600" height="8" viewBox="0 0 7.600 8"><path d="M3.800 0.200a2.600 2.600 0 0 1 2.600 2.600v2.400l1 1.200H0.200l1-1.200V2.800A2.600 2.600 0 0 1 3.800 0.200z" fill="#afb1b3"/><circle cx="3.800" cy="7.200" r="0.800" fill="#afb1b3"/></svg>
<span class="vt vr" style="left:996.2px;top:132.5px;color:#b0b0b0">Notifications</span>
<svg style="left:988px;top:183.400px" width="9" height="7" viewBox="0 0 10 8"><path d="M0.400 7.600V5.200C0.400 3 2 1.600 4.200 1.600c1.400 0 2.200.6 2.800 1.400.4-1.400 1.200-2.200 2.200-2.200.6 0 .8.600.2 1-.8.600-1 1.400-1 2.400v3.400H6.800V6H5.200v1.600H3.600V6H2v1.600z" fill="#afb1b3"/></svg>
<span class="vt vr" style="left:996.2px;top:195.7px;color:#b0b0b0">Gradle</span>
<svg style="left:988.600px;top:228.800px" width="7.600" height="8" viewBox="0 0 7.600 8"><rect x="0.500" y="0.500" width="5.200" height="7" rx="0.600" fill="none" stroke="#afb1b3" stroke-width="0.900"/><circle cx="5.400" cy="5.400" r="1.900" fill="#3c3f41" stroke="#afb1b3" stroke-width="0.800"/></svg>
<span class="vt vr" style="left:996.2px;top:241.3px;color:#b0b0b0">Layout Validation</span>
<svg style="left:988.800px;top:361.400px" width="7" height="8" viewBox="0 0 7 8"><rect x="0.500" y="0.500" width="6" height="7" rx="0.800" fill="none" stroke="#afb1b3" stroke-width="0.900"/><path d="M2 1.600h3" stroke="#afb1b3" stroke-width="0.800"/></svg>
<span class="vt vr" style="left:996.2px;top:373.0px;color:#b0b0b0">Device Explorer</span>
<svg style="left:988.400px;top:436px" width="8" height="8" viewBox="0 0 8 8"><rect x="0.500" y="2" width="5" height="5.600" rx="0.600" fill="none" stroke="#afb1b3" stroke-width="0.900"/><rect x="4" y="0" width="4" height="3.400" rx="0.600" fill="#afb1b3"/></svg>
<span class="vt vr" style="left:996.2px;top:448.5px;color:#b0b0b0">Running Devices</span>
<!-- ===== design panel ===== -->
<div id="design" class="abs" style="left:752px;top:74px;width:219.400px;height:415px;background:#3c3f41;overflow:hidden">
<span class="t" style="left:8.3px;top:6.4px;font-size:7.800px">activity_add.xml</span>
<svg style="left:67.0px;top:9.2px" width="4.800" height="3" viewBox="0 0 4.800 3"><path d="M0.300 0.300L2.400 2.600L4.500 0.300" fill="none" stroke="#afb1b3" stroke-width="0.700"/></svg>
<div class="abs" style="left:78.2px;top:4.6px;width:0.600px;height:11px;background:#515456"></div>
<svg style="left:83.2px;top:3.8px" width="12.600" height="12.600" viewBox="0 0 11 11"><path d="M5 3.600L9.800 6L5 8.400L0.200 6z" fill="#2f7fc0"/><path d="M5 0.800L9.800 3.200L5 5.600L0.200 3.200z" fill="#45a8f0"/><path d="M7.600 8.800h2.600L8.900 10.400z" fill="#afb1b3"/></svg>
<svg style="left:104.8px;top:4.4px" width="11" height="11" viewBox="0 0 11 11"><rect x="2.800" y="1" width="5" height="8.400" rx="0.800" transform="rotate(-38 5.300 5.200)" fill="none" stroke="#c3c5c7" stroke-width="0.900"/><path d="M0.800 3.600A4.800 4.800 0 0 1 4 0.600M9.800 6.800A4.800 4.800 0 0 1 6.600 9.800" fill="none" stroke="#c3c5c7" stroke-width="0.800"/><path d="M8 8.800h3L9.500 10.600z" fill="#afb1b3"/></svg>
<div class="abs" style="left:121.2px;top:4.6px;width:0.600px;height:11px;background:#515456"></div>
<svg style="left:126.6px;top:5.0px" width="11" height="11" viewBox="0 0 11 11"><circle cx="4.600" cy="4.600" r="4" fill="#9a9da0"/><path d="M4.600 0.600a4 4 0 0 1 0 8a5.200 5.200 0 0 0 0-8z" fill="#d0d2d4"/><circle cx="4.600" cy="4.600" r="4" fill="none" stroke="#c3c5c7" stroke-width="0.600"/><path d="M8 8.800h3L9.500 10.600z" fill="#afb1b3"/></svg>
<svg style="left:152.5px;top:6.0px" width="6" height="8.600" viewBox="0 0 6 8.600"><rect x="0.500" y="0.500" width="5" height="7.600" rx="0.900" fill="none" stroke="#c3c5c7" stroke-width="1"/><path d="M2 7h2" stroke="#c3c5c7" stroke-width="0.600"/></svg>
<span class="t" style="left:162.0px;top:6.4px;font-size:7.800px">Pixel</span>
<svg style="left:181.0px;top:9.2px" width="4.800" height="3" viewBox="0 0 4.800 3"><path d="M0.300 0.300L2.400 2.600L4.500 0.300" fill="none" stroke="#afb1b3" stroke-width="0.700"/></svg>
<span class="t" style="left:192.0px;top:6.6px;font-size:6.400px;color:#9a9c9e">&#187;</span>
<svg style="left:204.2px;top:5.4px" width="9" height="9" viewBox="0 0 9 9"><circle cx="4.500" cy="4.500" r="4.500" fill="#e8573f"/><rect x="4" y="1.800" width="1" height="3.600" fill="#f7c9c0"/><rect x="4" y="6.200" width="1" height="1" fill="#f7c9c0"/></svg>
<div class="abs" style="left:0;top:18.0px;width:220px;height:0.700px;background:#2f3133"></div>
<svg style="left:5.0px;top:25.4px" width="11" height="9" viewBox="0 0 11 9"><path d="M0.200 3.600C1.600 1.200 3.200 0.200 4.800 0.200S8 1.200 9.400 3.600C8 6 6.400 7 4.800 7S1.600 6 0.200 3.600z" fill="#c3c5c7"/><circle cx="4.800" cy="3.600" r="1.700" fill="#3c3f41"/><circle cx="4.800" cy="3.600" r="0.800" fill="#c3c5c7"/><path d="M7.600 7.200h3L9.100 9z" fill="#afb1b3"/></svg>
<svg style="left:22.0px;top:23.6px" width="10" height="10" viewBox="0 0 10 10"><path d="M1.600 2.600a3.600 3.600 0 1 0 5.400 4.600" fill="none" stroke="#c3c5c7" stroke-width="1.900"/><path d="M0.600 0.600L8.800 9.400" stroke="#c3c5c7" stroke-width="0.900"/><rect x="6.600" y="0.400" width="2" height="2" fill="#c3c5c7"/><rect x="7.400" y="3.600" width="1.600" height="1.600" fill="#4a88c7"/></svg>
<span class="t" style="left:41.7px;top:24.6px;font-size:7.600px">0dp</span>
<div class="abs" style="left:37.5px;top:30.8px;width:22.200px;height:2.400px;border:0.600px solid #7a7d80;border-top:none"></div>
<svg style="left:68.8px;top:23.4px" width="11" height="10.400" viewBox="0 0 11 10.400"><path d="M2.200 8.200V3.400a2.100 2.100 0 0 1 2.100-2.100h1.200a2.100 2.100 0 0 1 2.100 2.100V5" fill="none" stroke="#c3c5c7" stroke-width="1"/><circle cx="2.200" cy="8.800" r="1.300" fill="#c3c5c7"/><path d="M6.600 6.600l3.200 3.200M9.800 6.600l-3.200 3.200" stroke="#e0453a" stroke-width="1.200"/></svg>
<svg style="left:86.4px;top:23.4px" width="9.600" height="10" viewBox="0 0 9.600 10"><path d="M0.600 9.400L6 4" stroke="#c3c5c7" stroke-width="1.500"/><path d="M6.400 0.400l0.500 1.300 1.300 0.500-1.300 0.500-0.500 1.300-0.500-1.300-1.300-0.500 1.300-0.500zM8.600 4.400l0.300 0.700 0.700 0.300-0.700 0.300-0.300 0.700-0.300-0.700-0.700-0.300 0.700-0.300z" fill="#c3c5c7"/></svg>
<svg style="left:109.4px;top:23.4px" width="9.600" height="11" viewBox="0 0 9.600 11"><path d="M0.800 0.500h5.600M0.800 9h5.600M3.600 0.500V9" fill="none" stroke="#c3c5c7" stroke-width="1"/><path d="M6.400 9.200h3L7.900 11z" fill="#afb1b3"/></svg>
<svg style="left:204.2px;top:24.0px" width="9" height="9" viewBox="0 0 9 9"><circle cx="4.500" cy="4.500" r="4.500" fill="#3592d8"/><path d="M3.200 3.400a1.400 1.400 0 1 1 2 1.300c-.5.300-.7.600-.7 1.100" fill="none" stroke="#9fd0f5" stroke-width="0.900"/><rect x="4" y="6.600" width="1" height="1" fill="#9fd0f5"/></svg>
<div id="surface" class="abs" style="left:0;top:37.0px;width:220px;height:377.4px;background:#2d2f31;overflow:hidden">
<div class="abs" style="left:212.0px;top:2.0px;width:5.400px;height:212px;background:#505355"></div>
<div id="phone" class="abs" style="left:34.8px;top:49.4px;width:148px;height:263.400px;background:#fef7ff">
<div class="abs" style="left:0;top:0;width:148px;height:32.600px;background:#76a9f8"></div>
<span class="t" id="ptitle" style="left:22.500px;top:11px;font-size:10px;font-weight:bold;color:#fff;-webkit-text-stroke:0.250px #fff">Add to Your Contacts</span>
<span class="t scr" id="pname" style="left:7px;top:50.600px;font-size:10.600px">Name</span>
<div class="abs" style="left:41.400px;top:66.600px;width:104.400px;height:0.700px;background:#6a666c"></div>
<span class="t scr" id="pphone" style="left:7px;top:78px">Phone number</span>
<div class="abs" style="left:71.400px;top:91.200px;width:74.400px;height:0.700px;background:#a29ea4"></div>
<div class="abs" style="left:21.400px;top:121.400px;width:104.400px;height:15.400px;border-radius:7.700px;background:#76a9f8;color:#fff;font-weight:bold;font-size:10.400px;text-align:center;line-height:15.200px;-webkit-text-stroke:0.250px #fff">Add</div>
</div>
<svg style="left:185.6px;top:315.6px" width="11" height="11" viewBox="0 0 11 11"><path d="M0.400 10.600L10.600 0.400M4.400 10.600L10.600 4.400" stroke="#8a8d90" stroke-width="0.700"/></svg>
<div id="blue" class="abs" style="left:35.0px;top:361.6px;width:149px;height:20px;background:#3a7a90;border:0.600px solid #5a9cb3;overflow:hidden">
<span class="t" style="left:51.600px;top:-5.400px;font-size:12px;color:#9fc6d4">TextView</span>
<div class="abs" style="left:21.200px;top:10.400px;width:104.600px;height:12px;border:0.600px solid #a4cedb"></div>
<span class="t" style="left:28px;top:9.800px;font-size:15px;letter-spacing:1.400px;color:#b5d8e3;transform:scaleX(0.78);transform-origin:0 0">TEXTVIEW</span>
</div>
</div>
</div>
<div class="abs" style="left:972px;top:74px;width:0.600px;height:415px;background:#323435"></div>
<!-- ===== palette / attributes stripes ===== -->
<div class="abs" style="left:736px;top:74px;width:16px;height:415px;background:#3c3f41"></div>
<span class="vt vl" style="left:741.2px;top:101.5px;color:#b0b0b0">Palette</span>
<svg style="left:741.200px;top:105.200px" width="7.800" height="7.600" viewBox="0 0 7.800 7.600"><path d="M0 7.600V4.400h7.800v3.200z" fill="#afb1b3"/><path d="M0.600 3.600V1.600l1-.8 1 .8v2zM4 3.600V0.600h1l1 1.800 1-1.800h0.800v3H7V2L6 3.600 5 2v1.600z" fill="#afb1b3"/></svg>
<span class="vt vl" style="left:741.2px;top:468.5px;color:#b0b0b0">Component Tree</span>
<svg style="left:741.400px;top:471.600px" width="7.600" height="7.600" viewBox="0 0 7.600 7.600"><path d="M1 0.400v6.200h3M1 3h3" fill="none" stroke="#afb1b3" stroke-width="0.900"/><rect x="4.400" y="1.800" width="3" height="2.200" fill="#afb1b3"/><rect x="4.400" y="5.400" width="3" height="2.200" fill="#afb1b3"/></svg>
<svg style="left:974px;top:80.600px" width="8" height="8" viewBox="0 0 8 8"><path d="M1.200 0v8M4 0v8M6.800 0v8" stroke="#afb1b3" stroke-width="0.800"/><path d="M0 2.400h2.400M2.800 5.400h2.400M5.600 1.800h2.400" stroke="#afb1b3" stroke-width="1.400"/></svg>
<span class="vt vr" style="left:981.6px;top:92.0px;color:#b0b0b0">Attributes</span>
<!--EDITOR-->
<div id="editor" class="abs">
<div id="gutter" class="abs"></div>
<div class="abs" style="left:47.5px;top:295.23px;width:465px;height:15.625px;background:#323232"></div>
<div class="abs" style="left:96.0px;top:29.60px;width:154.7px;height:15px;background:#52503a"></div>
<div class="abs" style="left:78.9px;top:138.97px;width:45.8px;height:15px;background:#4f4c38"></div>
<div class="abs" style="left:159.1px;top:296.03px;width:11.5px;height:14px;background:#3b514d"></div>
<div class="ln" style="top:2.65px">64</div>
<div class="cl" style="top:-1.00px">        <span class="ns">app</span><span class="at">:layout_constraintStart_toStartOf</span><span class="v">="parent"</span></div>
<div class="ln" style="top:18.27px">65</div>
<div class="cl" style="top:14.62px">        <span class="ns">android</span><span class="at">:textSize</span><span class="v">="31sp"</span></div>
<div class="ln" style="top:33.90px">66</div>
<div class="cl" style="top:30.25px">        <span class="ns">android</span><span class="at">:text</span><span class="v">="Phone number"</span></div>
<div class="ln" style="top:49.52px">67</div>
<div class="cl" style="top:45.87px">        <span class="ns">android</span><span class="at">:padding</span><span class="v">="20dp"</span></div>
<div class="ln" style="top:65.15px">68</div>
<div class="cl" style="top:61.50px">        <span class="ns">android</span><span class="at">:fontFamily</span><span class="v">="@font/<span class="typo">beckytahliamp6r</span>"</span></div>
<div class="ln" style="top:80.77px">69</div>
<div class="cl" style="top:77.12px">        <span class="ns">android</span><span class="at">:textStyle</span><span class="v">="bold"</span></div>
<div class="ln" style="top:96.40px">70</div>
<div class="ln" style="top:112.02px">71</div>
<div class="cl" style="top:108.38px">        <span class="tg">/&gt;</span></div>
<div class="ln" style="top:127.65px">72</div>
<div class="ln" style="top:143.28px">73</div>
<div class="cl" style="top:139.62px">    <span class="tg">&lt;EditText</span></div>
<div class="ln" style="top:158.90px">74</div>
<div class="cl" style="top:155.25px">        <span class="ns">android</span><span class="at">:id</span><span class="v">="@+id/phone_edt"</span></div>
<div class="ln" style="top:174.53px">75</div>
<div class="cl" style="top:170.88px">        <span class="ns">android</span><span class="at">:layout_width</span><span class="v">="0dp"</span></div>
<div class="ln" style="top:190.15px">76</div>
<div class="cl" style="top:186.50px">        <span class="ns">android</span><span class="at">:layout_height</span><span class="v">="wrap_content"</span></div>
<div class="ln" style="top:205.78px">77</div>
<div class="cl" style="top:202.12px">        <span class="ns">app</span><span class="at">:layout_constraintTop_toBottomOf</span><span class="v">="@id/user_name_edt"</span></div>
<div class="ln" style="top:221.40px">78</div>
<div class="cl" style="top:217.75px">        <span class="ns">app</span><span class="at">:layout_constraintStart_toEndOf</span><span class="v">="@id/phone_tv"</span></div>
<div class="ln" style="top:237.03px">79</div>
<div class="cl" style="top:233.38px">        <span class="ns">app</span><span class="at">:layout_constraintEnd_toEndOf</span><span class="v">="parent"</span></div>
<div class="ln" style="top:252.65px">80</div>
<div class="cl" style="top:249.00px">        <span class="ns">android</span><span class="at">:inputType</span><span class="v">="phone"</span></div>
<div class="ln" style="top:268.28px">81</div>
<div class="cl" style="top:264.62px">        <span class="ns">android</span><span class="at">:padding</span><span class="v">="20dp"</span></div>
<div class="ln" style="top:283.90px">82</div>
<div class="cl" style="top:280.25px">        <span class="ns">android</span><span class="at">:textSize</span><span class="v">="25sp"</span></div>
<div class="ln cur" style="top:299.53px">83</div>
<div class="cl" style="top:295.88px">        <span class="ns">tools</span><span class="at">:text</span><span class="v">=<span style="color:#d2d46a">""</span></span></div>
<div class="ln" style="top:315.15px">84</div>
<div class="cl" style="top:311.50px">        <span class="ns">android</span><span class="at">:fontFamily</span><span class="v">="@font/<span class="typo">beckytahliamp6r</span>"</span></div>
<div class="ln" style="top:330.78px">85</div>
<div class="cl" style="top:327.12px">        <span class="tg">/&gt;</span></div>
<div class="ln" style="top:346.40px">86</div>
<div class="ln" style="top:362.03px">87</div>
<div class="cl" style="top:358.38px">    <span class="tg">&lt;Button</span></div>
<div class="ln" style="top:377.65px">88</div>
<div class="cl" style="top:374.00px">        <span class="ns">android</span><span class="at">:id</span><span class="v">="@+id/add_btn_to_database"</span></div>
<div class="ln" style="top:393.28px">89</div>
<div class="cl" style="top:389.62px">        <span class="ns">android</span><span class="at">:layout_width</span><span class="v">="0dp"</span></div>
<div class="ln" style="top:408.90px">90</div>
<div class="cl" style="top:405.25px">        <span class="ns">android</span><span class="at">:layout_height</span><span class="v">="wrap_content"</span></div>
<div class="abs" style="left:46.2px;top:0;width:0.6px;height:417px;background:#4d4f51"></div>
<div class="abs" style="left:40px;top:295.43px;width:6px;height:15.2px;background:#3a5a68"></div>
<svg style="left:43.300px;top:112.32px" width="6.400" height="7.800" viewBox="0 0 6.400 7.800"><path d="M0.4 7.400h5.600V3.200L3.200 0.400L0.400 3.200z" fill="#313335" stroke="#606366" stroke-width="0.600"/><path d="M1.800 4.800h2.800" stroke="#606366" stroke-width="0.600"/></svg>
<svg style="left:43.300px;top:143.58px" width="6.400" height="7.800" viewBox="0 0 6.400 7.800"><path d="M0.4 0.4h5.6v4.2L3.2 7.4L0.4 4.6z" fill="#313335" stroke="#606366" stroke-width="0.600"/><path d="M1.8 3h2.800" stroke="#606366" stroke-width="0.600"/></svg>
<svg style="left:43.300px;top:331.08px" width="6.400" height="7.800" viewBox="0 0 6.400 7.800"><path d="M0.4 7.400h5.600V3.200L3.200 0.400L0.400 3.200z" fill="#313335" stroke="#606366" stroke-width="0.600"/><path d="M1.800 4.800h2.800" stroke="#606366" stroke-width="0.600"/></svg>
<svg style="left:43.300px;top:362.33px" width="6.400" height="7.800" viewBox="0 0 6.400 7.800"><path d="M0.4 0.4h5.6v4.2L3.2 7.4L0.4 4.6z" fill="#313335" stroke="#606366" stroke-width="0.600"/><path d="M1.8 3h2.800" stroke="#606366" stroke-width="0.600"/></svg>
<svg style="left:55.4px;top:297.43px" width="8" height="10.600" viewBox="0 0 8 10.600"><path d="M4 0.200a3.700 3.700 0 0 1 2.200 6.700L6 7.600H2L1.800 6.900A3.700 3.700 0 0 1 4 0.200z" fill="#f4b43a"/><rect x="2.400" y="8" width="3.200" height="1" fill="#8e98a8"/><rect x="2.800" y="9.300" width="2.400" height="0.900" fill="#6b7488"/></svg>
<svg style="left:451.5px;top:4.9px" width="8.400" height="8.400" viewBox="0 0 8.400 8.400"><circle cx="4.200" cy="4.200" r="4.100" fill="#e05a4f"/><rect x="3.700" y="1.800" width="1" height="3.200" fill="#fff" opacity=".9"/><rect x="3.700" y="5.700" width="1" height="1" fill="#fff" opacity=".9"/></svg>
<span class="t" style="left:461.0px;top:5.5px;font-size:7.600px;color:#bbbbbb">2</span>
<svg style="left:469.7px;top:4.9px" width="9" height="8.200" viewBox="0 0 9 8.200"><path d="M4.500 0.200L8.900 8H0.100z" fill="#f0b23a"/><rect x="4" y="2.800" width="1" height="2.800" fill="#3c3f41"/><rect x="4" y="6.200" width="1" height="1" fill="#3c3f41"/></svg>
<span class="t" style="left:480.6px;top:5.5px;font-size:7.600px;color:#bbbbbb">14</span>
<svg style="left:495.0px;top:7.5px" width="6" height="3.600" viewBox="0 0 6 3.600"><path d="M0.400 3.200L3 0.500L5.600 3.200" fill="none" stroke="#c3c5c7" stroke-width="1.300"/></svg>
<svg style="left:509.4px;top:7.9px" width="6" height="3.600" viewBox="0 0 6 3.600"><path d="M0.400 0.400L3 3.100L5.600 0.400" fill="none" stroke="#c3c5c7" stroke-width="1.300"/></svg>
<div class="abs" style="left:513.4px;top:251.5px;width:5.500px;height:96px;background:#4b4d4f"></div>
<div class="abs" style="left:510.2px;top:102.7px;width:8.600px;height:1.100px;background:#c9a23a"></div>
<div class="abs" style="left:510.2px;top:151.3px;width:8.600px;height:1.100px;background:#c9a23a"></div>
<div class="abs" style="left:510.2px;top:180.2px;width:8.600px;height:1.100px;background:#c9a23a"></div>
<div class="abs" style="left:510.2px;top:258.4px;width:8.600px;height:1.100px;background:#c9a23a"></div>
<div class="abs" style="left:510.2px;top:283.4px;width:8.600px;height:1.100px;background:#c9a23a"></div>
<div class="abs" style="left:510.2px;top:372.8px;width:8.600px;height:1.100px;background:#c9a23a"></div>
<div class="abs" style="left:507.6px;top:213.2px;width:1.600px;height:2.400px;background:#6a6d70"></div>
<div class="abs" style="left:507.6px;top:319.0px;width:1.600px;height:2.400px;background:#6a6d70"></div>
<div class="abs" style="left:49.8px;top:408.9px;width:329px;height:7px;background:rgba(115,117,119,0.52)"></div>
</div>
<div class="abs" style="left:216px;top:73px;width:520px;height:1.100px;background:#3c3f41"></div>
<!--/EDITOR-->
<!-- ===== breadcrumbs ===== -->
<div id="crumbs" class="abs" style="left:216px;top:488.800px;width:769px;height:14.800px;background:#323436;border-top:0.800px solid #4a4d4f">
<span class="t" style="left:6.800px;top:3.600px;font-size:7.800px;color:#bbbbbb">androidx.constraintlayout.widget.ConstraintLayout</span>
<svg style="left:185.600px;top:3.400px" width="3" height="8" viewBox="0 0 3 8"><path d="M0.400 0.400L2.600 4L0.400 7.600" fill="none" stroke="#606364" stroke-width="0.600"/></svg>
<span class="t" style="left:195.300px;top:3.600px;font-size:7.800px;color:#bbbbbb">EditText</span>
</div>
<!-- ===== bottom tool window bar ===== -->
<div id="bottombar" class="abs" style="left:0;top:503.800px;width:1000px;height:16.800px;background:#3c3f41">
<svg style="left:20.600px;top:5.4px" width="5.600" height="8" viewBox="0 0 5.600 8"><path d="M1.200 0.600v6.800M1.200 5.200C3.600 5.200 4.400 4 4.400 2.200" fill="none" stroke="#afb1b3" stroke-width="1"/><circle cx="4.400" cy="1.400" r="1" fill="#afb1b3"/><circle cx="1.200" cy="1" r="1" fill="#afb1b3"/><circle cx="1.200" cy="7" r="1" fill="#afb1b3"/></svg>
<span class="t" style="left:31.2px;top:5.800px;font-size:6.900px;color:#b0b0b0">Git</span>
<svg style="left:52px;top:5.8px" width="8.600" height="6.400" viewBox="0 0 8.600 6.400"><path d="M0.800 6a3.600 3.600 0 1 1 7 0" fill="none" stroke="#afb1b3" stroke-width="1.300"/><path d="M4.200 5.800L5.800 2" stroke="#afb1b3" stroke-width="1"/></svg>
<span class="t" style="left:63.0px;top:5.800px;font-size:6.900px;color:#b0b0b0">Profiler</span>
<svg style="left:98px;top:5.8px" width="7.400" height="6.400" viewBox="0 0 7.400 6.400"><path d="M0 0.600h7.400M0 3.200h5M0 5.800h7.400" stroke="#afb1b3" stroke-width="1.100"/></svg>
<span class="t" style="left:108.7px;top:5.800px;font-size:6.900px;color:#b0b0b0">Logcat</span>
<svg style="left:143px;top:5.0px" width="8.800" height="8.400" viewBox="0 0 8.800 8.400"><path d="M2 0.400h4.800l1.600 2.400L4.400 8L0.400 2.800z" fill="none" stroke="#afb1b3" stroke-width="0.800"/><path d="M0.400 2.800h8M3 2.800L4.400 8L5.800 2.800M2 0.400L3 2.800M6.800 0.400L5.800 2.800" fill="none" stroke="#afb1b3" stroke-width="0.600"/></svg>
<span class="t" style="left:154.2px;top:5.800px;font-size:6.900px;color:#b0b0b0">App Quality Insights</span>
<svg style="left:230.600px;top:5.8px" width="7.400" height="6.400" viewBox="0 0 7.400 6.400"><path d="M2 0.600h5.400M2 3.200h5.400M2 5.800h5.400" stroke="#afb1b3" stroke-width="1.100"/><path d="M0 0.600h1.200M0 3.200h1.200M0 5.800h1.200" stroke="#afb1b3" stroke-width="1.100"/></svg>
<span class="t" style="left:241.5px;top:5.800px;font-size:6.900px;color:#b0b0b0">TODO</span>
<svg style="left:273.400px;top:5.4px" width="7.400" height="7.400" viewBox="0 0 7.400 7.400"><circle cx="3.700" cy="3.700" r="3.700" fill="#afb1b3"/><rect x="3.200" y="1.400" width="1" height="3" fill="#3c3f41"/><rect x="3.200" y="5" width="1" height="1" fill="#3c3f41"/></svg>
<span class="t" style="left:283.9px;top:5.800px;font-size:6.900px;color:#b0b0b0">Problems</span>
<svg style="left:326.800px;top:5.6px" width="7.400" height="7" viewBox="0 0 7.400 7"><rect width="7.400" height="7" rx="0.600" fill="#afb1b3"/><path d="M1.400 1.600l2 1.800-2 1.800M4 5.400h2" fill="none" stroke="#3c3f41" stroke-width="0.800"/></svg>
<span class="t" style="left:337.7px;top:5.800px;font-size:6.900px;color:#b0b0b0">Terminal</span>
<svg style="left:376.200px;top:5.2px" width="8" height="8" viewBox="0 0 8 8"><circle cx="4" cy="4" r="4" fill="#afb1b3"/><path d="M3 2.200L6 4L3 5.800z" fill="#3c3f41"/></svg>
<span class="t" style="left:387.4px;top:5.800px;font-size:6.900px;color:#b0b0b0">Services</span>
<svg style="left:426px;top:5.0px" width="7.400" height="8.400" viewBox="0 0 7.400 8.400"><rect x="1.200" y="0" width="5" height="6" rx="1.600" fill="#afb1b3"/><path d="M0 8.400c0-1.800 1.600-2.400 3.700-2.400s3.700.6 3.700 2.400z" fill="#afb1b3"/></svg>
<span class="t" style="left:436.8px;top:5.800px;font-size:6.900px;color:#b0b0b0">App Inspection</span>
<svg style="left:916.600px;top:5.2px" width="8" height="8" viewBox="0 0 8 8"><rect x="0.400" y="0.400" width="6" height="4.600" fill="none" stroke="#afb1b3" stroke-width="0.800"/><circle cx="5.200" cy="5" r="1.700" fill="#3c3f41" stroke="#afb1b3" stroke-width="0.800"/><path d="M6.400 6.200L7.800 7.600" stroke="#afb1b3" stroke-width="0.900"/></svg>
<span class="t" style="left:927.4px;top:5.800px;font-size:6.900px;color:#b0b0b0">Layout Inspector</span>
</div>
<!-- ===== status bar ===== -->
<div id="statusbar" class="abs" style="left:0;top:520.600px;width:1000px;height:11.400px;background:#3c3f41">
<svg style="left:3.800px;top:0.600px" width="8.400" height="8.400" viewBox="0 0 8.400 8.400"><rect x="2" y="0.400" width="6" height="6" fill="none" stroke="#afb1b3" stroke-width="0.800"/><path d="M0.400 2.400v5.600h5.600" fill="none" stroke="#afb1b3" stroke-width="0.800"/></svg>
<span class="t" style="left:820.6px;top:1.600px;font-size:7.300px;color:#aeb0b2">83:21</span>
<span class="t" style="left:847.0px;top:1.600px;font-size:7.300px;color:#aeb0b2">LF</span>
<span class="t" style="left:862.0px;top:1.600px;font-size:7.300px;color:#787a7c">UTF-8</span>
<span class="t" style="left:890.0px;top:1.600px;font-size:7.300px;color:#aeb0b2">4 spaces</span>
<svg style="left:928.400px;top:1px" width="5.600" height="8" viewBox="0 0 5.600 8"><path d="M1.200 0.600v6.800M1.200 5.200C3.600 5.200 4.400 4 4.400 2.200" fill="none" stroke="#afb1b3" stroke-width="1"/><circle cx="4.400" cy="1.400" r="1" fill="#afb1b3"/><circle cx="1.200" cy="1" r="1" fill="#afb1b3"/><circle cx="1.200" cy="7" r="1" fill="#afb1b3"/></svg>
<span class="t" style="left:938.5px;top:1.600px;font-size:7.300px;color:#aeb0b2">master</span>
<svg style="left:968px;top:0.600px" width="8" height="8.400" viewBox="0 0 8 8.400"><rect x="0" y="3.800" width="5.600" height="4.400" fill="#c3c5c7"/><path d="M4.200 3.800V2.200a1.600 1.600 0 0 1 3.200 0v0.800" fill="none" stroke="#c3c5c7" stroke-width="0.900"/></svg>
<svg style="left:984.400px;top:1.200px" width="8.200" height="7.200" viewBox="0 0 8.200 7.200"><path d="M0 0h3.600v7.200H0zM4.600 0h3.600v7.200H4.600z" fill="#c3c5c7"/><path d="M5.400 4.400h2v2.800l-1-.8-1 .8z" fill="#3c3f41"/></svg>
</div>
<!-- ===== windows taskbar ===== -->
<div id="taskbar" class="abs" style="left:0;top:532px;width:1000px;height:31px;background:#202516;overflow:hidden">
<svg style="left:12px;top:4.6px" width="19" height="19" viewBox="0 0 19 19"><path d="M6.400 3.200a4.400 4.400 0 1 0 4.400 6.400a5 5 0 0 1-4.400-6.400z" fill="#f5c13d" transform="translate(-2,1.600)"/><path d="M4.200 17.800a3.600 3.600 0 0 1 0.400-7.200a5 5 0 0 1 9.200 0.800a3.200 3.200 0 0 1 0 6.400z" fill="#9dc4f8"/><circle cx="13.600" cy="4.600" r="4.600" fill="#f5a9a7"/></svg>
<span class="t" style="left:24.300px;top:6.2px;font-size:6.600px;color:#8a1f1f;font-weight:bold">1</span>
<span class="t" style="left:33.700px;top:6.2px;font-size:8.200px;letter-spacing:-0.550px;color:#ffffff">20°C</span>
<span class="t" dir="rtl" lang="ar" style="left:33.700px;top:15.6px;font-size:7.400px;color:#c8c8c8;font-family:'DejaVu Sans',sans-serif">غائم غالبًا</span>
<svg style="left:304.200px;top:8.0px" width="15.800" height="15.800" viewBox="0 0 16 16"><defs><linearGradient id="wg" x1="0" y1="0" x2="1" y2="1"><stop offset="0" stop-color="#6fd3fb"/><stop offset="1" stop-color="#1f8fe0"/></linearGradient></defs><rect x="0" y="0" width="7.500" height="7.500" rx="0.800" fill="url(#wg)"/><rect x="8.500" y="0" width="7.500" height="7.500" rx="0.800" fill="url(#wg)"/><rect x="0" y="8.500" width="7.500" height="7.500" rx="0.800" fill="url(#wg)"/><rect x="8.500" y="8.500" width="7.500" height="7.500" rx="0.800" fill="url(#wg)"/></svg>
<div class="abs" style="left:328.700px;top:5.0px;width:134px;height:21px;border-radius:10.500px;background:#3b3f30;border:0.500px solid #4a4e3e"></div>
<svg style="left:336px;top:10.6px" width="10" height="10" viewBox="0 0 10 10"><circle cx="4" cy="4" r="3.200" fill="none" stroke="#e8e8e8" stroke-width="1"/><path d="M6.400 6.400L9.400 9.400" stroke="#e8e8e8" stroke-width="1.100"/></svg>
<span class="t" style="left:352.500px;top:11.2px;font-size:8.600px;color:#e4e4e4">Search</span>
<svg style="left:438px;top:6.6px" width="31" height="17" viewBox="0 0 31 17"><ellipse cx="15" cy="14.600" rx="14.600" ry="2.400" fill="#e6b28a"/><path d="M3 5.600L11.400 3.600L13 11.400L4.600 13.400z" fill="#f4efe6"/><path d="M4.400 7l6-1.400 1 4.600-6 1.400z" fill="#8fc7a0"/><path d="M11 2.400l2.600-1.400 0.800 1.400-2.600 1.400z" fill="#f2c33c"/><path d="M19 6.600a3.400 3.400 0 0 1 6.800 0v6.800a1.600 1.600 0 0 1-1.600 1.600h-3.600a1.600 1.600 0 0 1-1.600-1.600z" fill="#3f8fe6"/><path d="M20.400 4a2 2 0 0 1 4 0" fill="none" stroke="#2a6fc2" stroke-width="1"/><rect x="20.600" y="9" width="3.600" height="3" rx="0.600" fill="#7db7f5"/></svg>
<svg style="left:481px;top:8.0px" width="14.400" height="15" viewBox="0 0 14.400 15"><rect x="0" y="4.600" width="9.600" height="9.600" rx="1" fill="#9a9d96"/><rect x="3.600" y="0.600" width="10.400" height="10.400" rx="1" fill="#f2f2f2"/></svg>
<svg style="left:508.600px;top:7.8px" width="15.400" height="15.400" viewBox="0 0 16 16"><defs><linearGradient id="cg" x1="0" y1="0" x2="1" y2="1"><stop offset="0" stop-color="#2b9df0"/><stop offset=".45" stop-color="#a86bf0"/><stop offset=".75" stop-color="#f06b8f"/><stop offset="1" stop-color="#f5b13d"/></linearGradient></defs><path d="M5 1.600h4.600c1.200 0 2 .6 2.400 1.800l.6 2h1c1.400 0 2.200 1.200 1.800 2.600l-1.400 4.600c-.4 1.200-1.200 1.800-2.400 1.800H6.600c-1.200 0-2-.6-2.400-1.800l-.6-2H2.400C1 10.600.2 9.400.6 8l1.400-4.600C2.400 2.200 3.800 1.600 5 1.600z" fill="url(#cg)"/><path d="M5.600 5.600h4.800l-1 4.800H4.600z" fill="#202516" opacity=".35"/></svg>
<svg style="left:537.400px;top:8.0px" width="15" height="15" viewBox="0 0 15 15"><circle cx="7.500" cy="7.500" r="7.500" fill="#f4f6f8"/><path d="M7.500 2.600L3.800 11.600h1.600l0.900-2.400h2.400l0.900 2.400h1.600zM7.500 5.400l0.800 2.600H6.700z" fill="#3d7fe0"/><path d="M3 9.600c1.400 1.800 7.600 1.800 9 0" fill="none" stroke="#3ddc84" stroke-width="1"/></svg>
<div class="abs" style="left:539.500px;top:26.8px;width:10.600px;height:1.600px;border-radius:0.800px;background:#b8bab4"></div>
<svg style="left:566px;top:7.4px" width="15.200" height="16" viewBox="0 0 15.200 16"><path d="M4.600 3.600V2.400a1.400 1.400 0 0 1 1.400-1.400h3.200a1.400 1.400 0 0 1 1.400 1.400v1.200" fill="none" stroke="#5fb6f0" stroke-width="1"/><rect x="0.400" y="3.400" width="14.400" height="12.200" rx="1.600" fill="#f4f4f4"/><rect x="4" y="6.200" width="3.200" height="3.200" fill="#f25022"/><rect x="8" y="6.200" width="3.200" height="3.200" fill="#7fba00"/><rect x="4" y="10.200" width="3.200" height="3.200" fill="#00a4ef"/><rect x="8" y="10.200" width="3.200" height="3.200" fill="#ffb900"/></svg>
<svg style="left:593.600px;top:7.4px" width="16.400" height="16.400" viewBox="0 0 16.400 16.400"><defs><linearGradient id="eg" x1="0" y1="0" x2="1" y2="1"><stop offset="0" stop-color="#35c1a8"/><stop offset=".5" stop-color="#1a9be0"/><stop offset="1" stop-color="#1560c0"/></linearGradient></defs><circle cx="8.200" cy="8.200" r="7.600" fill="url(#eg)"/><path d="M5 9.600a3.400 3.400 0 0 1 6.600-1.400c.4 1.400-.6 2.400-2 2.400H7.400c0 1.600 1.600 2.800 3.600 2.600-1.600 1.200-4.600.8-5.600-1.400a4 4 0 0 1-.4-2.200z" fill="#202516" opacity=".55"/><rect x="1" y="9.600" width="6" height="5" rx="0.800" fill="#c98a2e"/><rect x="1" y="11.400" width="6" height="1" fill="#8a5a14"/></svg>
<div class="abs" style="left:600px;top:26.8px;width:3.600px;height:1.600px;border-radius:0.800px;background:#8a8c86"></div>
<svg style="left:622.400px;top:7.4px" width="16.400" height="16.400" viewBox="0 0 16 16"><circle cx="8" cy="8" r="8" fill="#e8453c"/><path d="M8 8L1.100 4A8 8 0 0 0 8 16z" fill="#34a853"/><path d="M8 8l3.500 8A8 8 0 0 0 14.900 4H8z" fill="#fbbc05"/><path d="M8 8L1.100 4A8 8 0 0 1 14.900 4z" fill="#ea4335"/><circle cx="8" cy="8" r="3.700" fill="#f4f4f4"/><circle cx="8" cy="8" r="2.900" fill="#4285f4"/></svg>
<svg style="left:651px;top:8.4px" width="16.600" height="15" viewBox="0 0 16.600 15"><path d="M0.400 8.600L5 6.800L7.600 9.800L3.800 11.600z" fill="#4a7fc8"/><path d="M5 6.800C7 5.600 8.400 2.400 10.400 0.400C11.600 3 13.200 8 16.200 12.600C13.600 11.600 12 13 10.600 14.600C9.400 12.600 8.600 11 7.600 9.800z" fill="#e8632a"/><path d="M10.400 0.400C11.600 3 13.200 8 16.200 12.600C13.600 11.600 12 13 10.600 14.600C11 10 10.800 5 10.400 0.400z" fill="#b5271c"/></svg>
<svg style="left:679.400px;top:8.2px" width="16.800" height="15" viewBox="0 0 16.800 15"><path d="M0.400 1.600a1 1 0 0 1 1-1h4.400l1.600 1.800h8a1 1 0 0 1 1 1v9.800a1 1 0 0 1-1 1H1.400a1 1 0 0 1-1-1z" fill="#f5b83a"/><path d="M0.400 4.800h16v8.400a1 1 0 0 1-1 1H1.400a1 1 0 0 1-1-1z" fill="#fbd461"/><rect x="4.600" y="10.400" width="7.600" height="3.800" rx="0.600" fill="#3d8fe0"/></svg>
<div class="abs" style="left:685px;top:26.8px;width:5px;height:1.600px;border-radius:0.800px;background:#8a8c86"></div>
<svg style="left:809.500px;top:13.0px" width="8.200" height="5" viewBox="0 0 8.200 5"><path d="M0.500 4.500L4.100 0.700L7.700 4.500" fill="none" stroke="#f0f0f0" stroke-width="1"/></svg>
<svg style="left:829.400px;top:11.8px" width="11.200" height="7.400" viewBox="0 0 11.200 7.400"><path d="M2.800 7.200a2.600 2.600 0 0 1-0.200-5.200a3.600 3.600 0 0 1 6.600 1a2.100 2.100 0 0 1-0.200 4.200z" fill="#2f8fe8"/></svg>
<span class="t" style="left:852.400px;top:11.6px;font-size:7.600px;color:#ffffff">ENG</span>
<svg style="left:879px;top:11.0px" width="10.800" height="8.400" viewBox="0 0 10.800 8.400"><path d="M0.400 3a7.200 7.200 0 0 1 10 0M2 4.800a4.800 4.800 0 0 1 6.800 0M3.600 6.400a2.600 2.600 0 0 1 3.600 0" fill="none" stroke="#f0f0f0" stroke-width="0.900"/><circle cx="5.400" cy="7.600" r="0.800" fill="#f0f0f0"/></svg>
<svg style="left:894.400px;top:11.0px" width="11.200" height="8.800" viewBox="0 0 11.200 8.800"><path d="M0.400 3h2L5 0.800v7.200L2.400 5.800h-2z" fill="none" stroke="#f0f0f0" stroke-width="0.800"/><path d="M6.400 2.800a2.200 2.200 0 0 1 0 3.200M7.800 1.600a4 4 0 0 1 0 5.600M9.200 0.400a5.800 5.800 0 0 1 0 8" fill="none" stroke="#f0f0f0" stroke-width="0.800"/></svg>
<svg style="left:910px;top:10.6px" width="11.400" height="8.400" viewBox="0 0 11.400 8.400"><rect x="0.500" y="2.200" width="9.600" height="5.600" rx="1" fill="#f0f0f0"/><rect x="10.400" y="4" width="1" height="2" fill="#f0f0f0"/><path d="M2.400 2.400V0.600h1.600l1.200 1.800" fill="none" stroke="#f0f0f0" stroke-width="0.800"/></svg>
<span class="t" id="clock" style="left:943.400px;top:6.4px;font-size:7.800px;color:#ffffff">6:33 PM</span>
<span class="t" id="date" style="left:931px;top:16.2px;font-size:7.800px;color:#ffffff">12/14/2024</span>
<svg style="left:977.400px;top:10.4px" width="9.200" height="10" viewBox="0 0 9.200 10"><path d="M4.600 0.600a3 3 0 0 1 3 3v2.600l1 1.600H0.600l1-1.600V3.600a3 3 0 0 1 3-3z" fill="none" stroke="#f0f0f0" stroke-width="0.900"/><path d="M3.400 8.600a1.200 1.200 0 0 0 2.400 0" fill="none" stroke="#f0f0f0" stroke-width="0.900"/></svg>
</div>
<span class="t" dir="rtl" lang="ar" id="wm" style="left:437.800px;top:526.400px;font-size:33px;font-weight:bold;color:#989b93;-webkit-text-stroke:0.900px #989b93;opacity:0.550;font-family:'DejaVu Sans',sans-serif;z-index:5">خمسات</span>
</div>
</body>
</html>
